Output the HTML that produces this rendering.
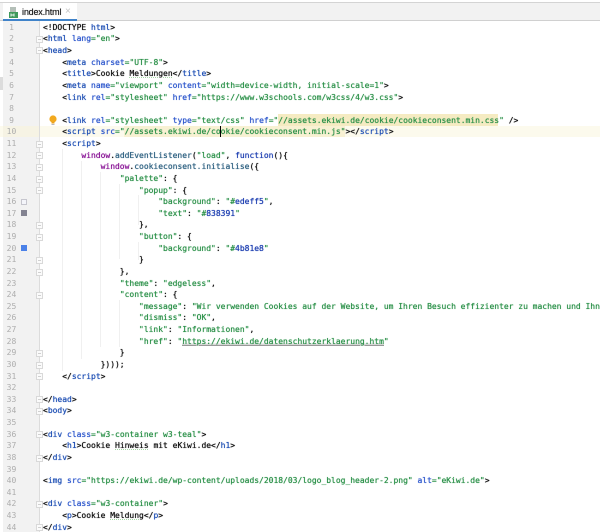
<!DOCTYPE html>
<html lang="de">
<head>
<meta charset="utf-8">
<title>index.html</title>
<style>
html,body{margin:0;padding:0;background:#fff}
#r{position:relative;width:600px;height:532px;overflow:hidden;background:#fff}
#r div{position:absolute}
#top{left:0;top:2px;width:600px;height:1px;background:#d4d4d4}
#bar{left:0;top:3px;width:600px;height:17px;background:#f2f2f2}
#barb{left:0;top:20px;width:600px;height:1px;background:#d0d0d0}
#tab{left:3px;top:3px;width:74px;height:16px;background:#fff}
#tabu{left:3px;top:19px;width:74px;height:2px;background:#4083c9}
#tn{left:22px;top:6px;font:9px/13px "Liberation Sans",sans-serif;color:#222;letter-spacing:-.02em;white-space:pre;text-shadow:0 0 .5px #222}
#tx{left:65px;top:6px;font:10px/12px "Liberation Sans",sans-serif;color:#c4c4c4}
#gut{left:3px;top:21px;width:36px;height:511px;background:#f2f2f2}
#gutb{left:39px;top:21px;width:1px;height:511px;background:#dcdcdc}
#ls{left:0;top:77px;width:3px;height:13px;background:#dcdcdc}
#cur{left:0;top:125.9px;width:600px;height:11.6px;background:#fcfaed}
#curg{left:3px;top:125.9px;width:36px;height:11.6px;background:#f6f3e4}
.g{width:1px;background:#f0f0f0}
.h{height:11px}
#nums,#code{top:21.8px;font-size:8px;line-height:11.63px;white-space:pre;font-family:"DejaVu Sans Mono","Liberation Mono",monospace}
#nums{left:3px;width:17px;text-align:center;color:#adadad}
#code{left:43px;color:#111;letter-spacing:-.016px;text-shadow:0 0 .6px currentColor}
.t{color:#1e4fb4}.a{color:#2a55cc}.s{color:#2a9048}.w{color:#871094}.f{color:#2d6080}.k{color:#1b3db0}.u{text-decoration:underline;text-decoration-color:#999;background:linear-gradient(transparent 72%,#d8d8d8 72%)}.y{text-decoration:underline dotted #a6d8a6}
.m{width:5px;height:5px;left:36px;background:#fbfbfb;border:.5px solid #d9d9d9;box-sizing:content-box}
.m::after{content:"";position:absolute;left:1px;top:2px;width:3px;height:1px;background:#d0d0d0}
.sw{left:21px;width:6px;height:6px;box-sizing:border-box}
</style>
</head>
<body>
<div id="r">
<div id="top"></div><div id="bar"></div><div id="barb"></div><div id="tab"></div><div id="tabu"></div>
<svg style="position:absolute;left:9px;top:7px" width="10" height="11" viewBox="0 0 10 11"><rect x="1" y="0" width="6" height="5" fill="#b4bfb8"/><rect x="0" y="5" width="9" height="6" fill="#3f9a5c"/><path d="M2 6.5v3M2 8h3M5 6.5v3" stroke="#eaf5ee" stroke-width="1" fill="none"/></svg>
<div id="tn">index.html</div><div id="tx">×</div>
<div id="gut"></div><div id="ls"></div>
<div class="h" style="left:278px;top:114.2px;width:220px;height:11.7px;background:#f5ebc2"></div>
<div id="cur"></div><div id="curg"></div><div id="gutb"></div>
<div class="h" style="left:124px;top:125.9px;width:221px;height:11.6px;background:#f8f1d3"></div>
<div class="g" style="left:62px;top:149px;height:222px"></div>
<div class="g" style="left:81px;top:161px;height:198px"></div>
<div class="g" style="left:100px;top:172px;height:175px"></div>
<div class="g" style="left:119px;top:184px;height:75px"></div>
<div class="g" style="left:119px;top:300px;height:47px"></div>
<div class="g" style="left:138px;top:195px;height:30px"></div>
<div class="g" style="left:138px;top:242px;height:18px"></div>
<div class="m" style="top:36px"></div><div class="m" style="top:47px"></div>
<div class="m" style="top:141px"></div><div class="m" style="top:152px"></div><div class="m" style="top:164px"></div><div class="m" style="top:176px"></div><div class="m" style="top:187px"></div>
<div class="m" style="top:222px"></div><div class="m" style="top:234px"></div><div class="m" style="top:257px"></div><div class="m" style="top:269px"></div><div class="m" style="top:292px"></div>
<div class="m" style="top:350px"></div><div class="m" style="top:362px"></div><div class="m" style="top:373px"></div><div class="m" style="top:396px"></div><div class="m" style="top:408px"></div><div class="m" style="top:431px"></div><div class="m" style="top:455px"></div><div class="m" style="top:501px"></div><div class="m" style="top:524px"></div>
<div class="sw" style="top:199px;background:#f4f5fa;border:1px solid #c6c6ce"></div>
<div class="sw" style="top:210px;background:#838391"></div>
<div class="sw" style="top:245px;background:#4b81e8"></div>
<svg style="position:absolute;left:49px;top:115px" width="8" height="11" viewBox="0 0 8 11"><circle cx="4" cy="4" r="3.6" fill="#f2a91e"/><rect x="2.5" y="7" width="3" height="1.5" fill="#e8a020"/><rect x="2.5" y="9" width="3" height="1" fill="#b9b9b9"/></svg>
<div id="nums">1
2
3
4
5
6
7
8
9
10
11
12
13
14
15
16
17
18
19
20
21
22
23
24
25
26
27
28
29
30
31
32
33
34
35
36
37
38
39
40
41
42
43
44
45</div>
<div id="code">&lt;!DOCTYPE <span class="t">html</span>&gt;
&lt;<span class="t">html</span> <span class="a">lang</span><span class="s">="en"</span>&gt;
&lt;<span class="t">head</span>&gt;
    &lt;<span class="t">meta</span> <span class="a">charset</span><span class="s">="UTF-8"</span>&gt;
    &lt;<span class="t">title</span>&gt;Cookie <span class="y">Meldungen</span>&lt;/<span class="t">title</span>&gt;
    &lt;<span class="t">meta</span> <span class="a">name</span><span class="s">="viewport"</span> <span class="a">content</span><span class="s">="width=device-width, initial-scale=1"</span>&gt;
    &lt;<span class="t">link</span> <span class="a">rel</span><span class="s">="stylesheet"</span> <span class="a">href</span><span class="s">="https://www.w3schools.com/w3css/4/w3.css"</span>&gt;

    &lt;<span class="t">link</span> <span class="a">rel</span><span class="s">="stylesheet"</span> <span class="a">type</span><span class="s">="text/css"</span> <span class="a">href</span><span class="s">="//assets.ekiwi.de/cookie/cookieconsent.min.css"</span> /&gt;
    &lt;<span class="t">script</span> <span class="a">src</span><span class="s">="//assets.ekiwi.de/cookie/cookieconsent.min.js"</span>&gt;&lt;/<span class="t">script</span>&gt;
    &lt;<span class="t">script</span>&gt;
        <span class="w">window</span>.<span class="f">addEventListener</span>(<span class="s">"load"</span>, <span class="k">function</span>(){
            <span class="w">window</span>.<span class="f">cookieconsent.initialise</span>({
                <span class="s">"palette"</span>: {
                    <span class="s">"popup"</span>: {
                        <span class="s">"background"</span>: <span class="s">"#<span class="k">edeff5</span>"</span>,
                        <span class="s">"text"</span>: <span class="s">"#<span class="k">838391</span>"</span>
                    },
                    <span class="s">"button"</span>: {
                        <span class="s">"background"</span>: <span class="s">"#<span class="k">4b81e8</span>"</span>
                    }
                },
                <span class="s">"theme"</span>: <span class="s">"edgeless"</span>,
                <span class="s">"content"</span>: {
                    <span class="s">"message"</span>: <span class="s">"Wir verwenden Cookies auf der Website, um Ihren Besuch effizienter zu machen und Ihnen</span>
                    <span class="s">"dismiss"</span>: <span class="s">"OK"</span>,
                    <span class="s">"link"</span>: <span class="s">"Informationen"</span>,
                    <span class="s">"href"</span>: <span class="s">"<span class="u">https://ekiwi.de/datenschutzerklaerung.htm</span>"</span>
                }
            })));
    &lt;/<span class="t">script</span>&gt;

&lt;/<span class="t">head</span>&gt;
&lt;<span class="t">body</span>&gt;

&lt;<span class="t">div</span> <span class="a">class</span><span class="s">="w3-container w3-teal"</span>&gt;
    &lt;<span class="t">h1</span>&gt;Cookie <span class="y">Hinweis</span> mit eKiwi.de&lt;/<span class="t">h1</span>&gt;
&lt;/<span class="t">div</span>&gt;

&lt;<span class="t">img</span> <span class="a">src</span><span class="s">="https://ekiwi.de/wp-content/uploads/2018/03/logo_blog_header-2.png"</span> <span class="a">alt</span><span class="s">="eKiwi.de"</span>&gt;

&lt;<span class="t">div</span> <span class="a">class</span><span class="s">="w3-container"</span>&gt;
    &lt;<span class="t">p</span>&gt;Cookie <span class="y">Meldung</span>&lt;/<span class="t">p</span>&gt;
&lt;/<span class="t">div</span>&gt;</div>
<div style="left:220px;top:126px;width:1px;height:11px;background:#000"></div>
</div>
</body>
</html>
